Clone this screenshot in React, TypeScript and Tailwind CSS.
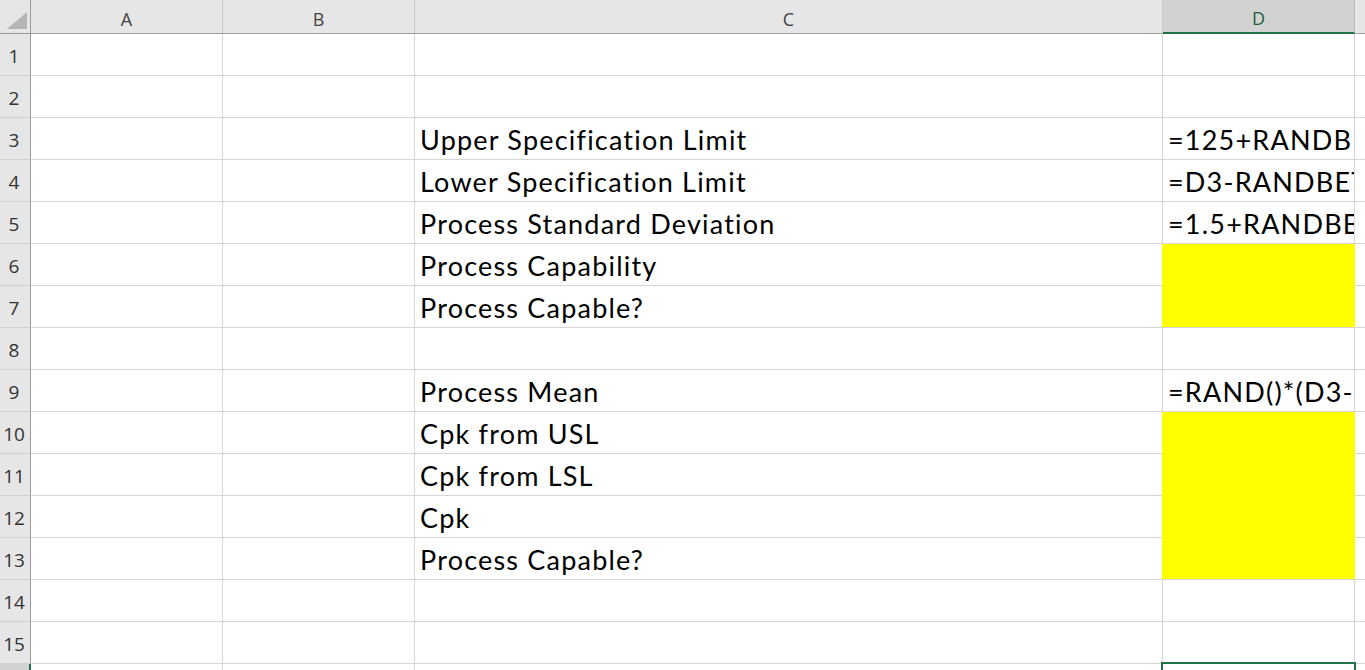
import React from 'react';

type Row = {
    c?: string;
    d?: string;
    fill?: 'top' | 'mid' | 'end';
};

const rows: Row[] = [
    {},
    {},
    { c: 'Upper Specification Limit', d: '=125+RANDBETWEEN(0,25)' },
    { c: 'Lower Specification Limit', d: '=D3-RANDBETWEEN(10,20)' },
    { c: 'Process Standard Deviation', d: '=1.5+RANDBETWEEN(0,10)/10' },
    { c: 'Process Capability', fill: 'top' },
    { c: 'Process Capable?', fill: 'end' },
    {},
    { c: 'Process Mean', d: '=RAND()*(D3-D4)+D4' },
    { c: 'Cpk from USL', fill: 'top' },
    { c: 'Cpk from LSL', fill: 'mid' },
    { c: 'Cpk', fill: 'mid' },
    { c: 'Process Capable?', fill: 'end' },
    {},
    {},
];

const cellFont = { fontFamily: 'Lato, "Open Sans", sans-serif' };
const headFont = { fontFamily: '"Open Sans", "Noto Sans", sans-serif' };

const ColHead = ({ label, active }: { label: string; active?: boolean }) => (
    <div
        className={`h-[34px] flex items-center justify-center pt-[5px] text-[18px] border-r ${
            active
                ? 'bg-[#d2d2d2] text-[#1e5e3b] border-b-2 border-b-[#217346] border-r-[#bdbdbd]'
                : 'bg-[#e6e6e6] text-[#444] border-b border-b-[#9b9b9b] border-r-[#c8c8c8]'
        }`}
        style={headFont}
    >
        {label}
    </div>
);

const RowHead = ({ n, active }: { n: number; active?: boolean }) => (
    <div
        className={`h-[42px] flex items-center justify-center pt-[4px] pr-[2px] text-[19px] border-b border-b-[#cfcfcf] ${
            active
                ? 'bg-[#d2d2d2] text-[#1e5e3b] border-r-2 border-r-[#217346]'
                : 'bg-[#e6e6e6] text-[#333] border-r border-r-[#9b9b9b]'
        }`}
        style={headFont}
    >
        {n}
    </div>
);

const Cell = ({ text, className = '' }: { text?: string; className?: string }) => (
    <div
        className={`relative h-[42px] flex items-end overflow-hidden whitespace-nowrap border-r border-b px-[5px] pb-[6px] text-[27px] leading-none tracking-[1.2px] [font-variant-ligatures:none] text-black ${className}`}
        style={cellFont}
    >
        {text}
    </div>
);

export default function App() {
    return (
        <div className="w-[1365px] h-[670px] overflow-hidden bg-white select-none">
            <div className="grid grid-cols-[31px_192px_192px_748px_192px_1fr]">
                {/* corner with the select-all triangle */}
                <div className="h-[34px] bg-[#e6e6e6] border-r border-b border-r-[#9b9b9b] border-b-[#9b9b9b] flex items-end justify-end pr-[3px] pb-[4px]">
                    <svg width="20" height="17" viewBox="0 0 20 17">
                        <polygon points="20,0 20,17 0,17" fill="#b5b5b5" />
                    </svg>
                </div>
                <ColHead label="A" />
                <ColHead label="B" />
                <ColHead label="C" />
                <ColHead label="D" active />
                <ColHead label="" />

                {rows.map((r, i) => {
                    const yellow = !!r.fill;
                    const dBorder = yellow
                        ? r.fill === 'end'
                            ? 'bg-[#ffff00] border-r-[#ffff00] border-b-[#d4d4d4]'
                            : 'bg-[#ffff00] border-r-[#ffff00] border-b-[#ffff00]'
                        : 'border-[#d4d4d4]';
                    return (
                        <React.Fragment key={i}>
                            <RowHead n={i + 1} />
                            <Cell className="border-[#d4d4d4]" />
                            <Cell className="border-[#d4d4d4]" />
                            <Cell
                                text={r.c}
                                className={yellow ? 'border-b-[#d4d4d4] border-r-[#ffff00]' : 'border-[#d4d4d4]'}
                            />
                            <Cell text={r.d} className={dBorder} />
                            <Cell className="border-[#d4d4d4]" />
                        </React.Fragment>
                    );
                })}

                {/* row 16, D16 is the active cell */}
                <RowHead n={16} active />
                <Cell className="border-[#d4d4d4]" />
                <Cell className="border-[#d4d4d4]" />
                <Cell className="border-[#d4d4d4]" />
                <div className="relative h-[42px] border-r border-b border-[#d4d4d4]">
                    <div className="absolute -left-[2px] -top-[2px] -right-[2px] bottom-0 border-2 border-[#217346]" />
                </div>
                <Cell className="border-[#d4d4d4]" />
            </div>
        </div>
    );
}
